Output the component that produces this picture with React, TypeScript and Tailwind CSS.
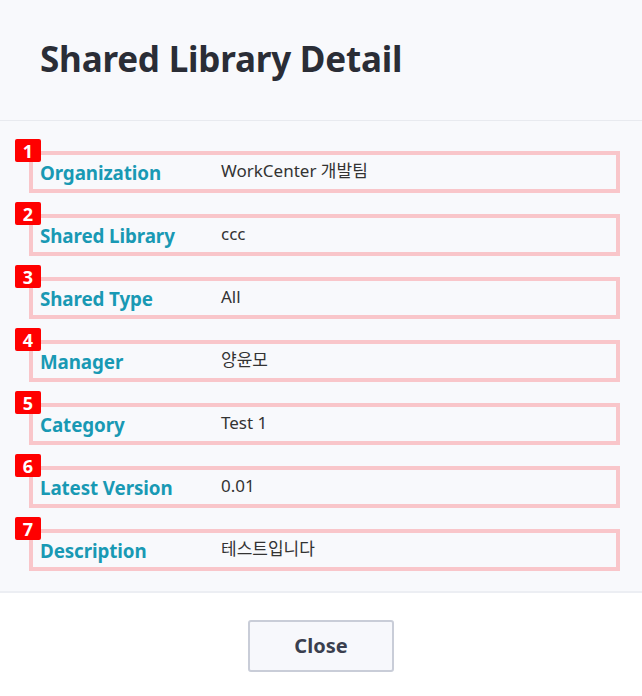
const rows = [
  { no: 1, label: "Organization", value: "WorkCenter 개발팀" },
  { no: 2, label: "Shared Library", value: "ccc" },
  { no: 3, label: "Shared Type", value: "All" },
  { no: 4, label: "Manager", value: "양윤모" },
  { no: 5, label: "Category", value: "Test 1" },
  { no: 6, label: "Latest Version", value: "0.01" },
  { no: 7, label: "Description", value: "테스트입니다" },
];

const font = {
  fontFamily: '"Noto Sans", "Noto Sans CJK KR", sans-serif',
};

export default function App() {
  return (
    <div className="w-[642px] h-[696px] bg-white flex flex-col" style={font}>
      {/* 헤더 */}
      <div className="h-[121px] shrink-0 bg-[#f8f9fc] border-b border-[#e8eaef] flex items-center pl-[40px] pb-[2px]">
        <h1 className="text-[35px] font-bold text-[#2a2d36] tracking-[-0.2px]">
          Shared Library Detail
        </h1>
      </div>

      {/* 상세 항목 */}
      <div className="h-[472px] shrink-0 bg-[#f8f9fc] border-b-2 border-[#eceef3] pt-[30px] pl-[29px] pr-[22px] flex flex-col gap-[21px]">
        {rows.map((row) => (
          <div
            key={row.no}
            className="relative h-[42px] border-4 border-[#f9c6ca] flex items-center"
          >
            <span className="absolute left-[-18px] top-[-16px] w-[26px] h-[23px] bg-[#ff0000] rounded-[2px] text-white font-bold text-[18px] leading-none flex items-center justify-center">
              {row.no}
            </span>
            <span className="w-[188px] pl-[7px] pt-[2px] text-[18.8px] font-bold text-[#1999b4] tracking-[-0.1px]">
              {row.label}
            </span>
            <span className="text-[17px] text-[#333333] pb-[2px]">{row.value}</span>
          </div>
        ))}
      </div>

      {/* 하단 버튼 */}
      <div className="flex-1 flex justify-center pt-[27px]">
        <button
          type="button"
          className="w-[146px] h-[52px] border-2 border-[#c9cdd8] rounded-[3px] bg-[#f7f8fc] text-[20px] font-bold text-[#3a3f4f]"
        >
          Close
        </button>
      </div>
    </div>
  );
}
